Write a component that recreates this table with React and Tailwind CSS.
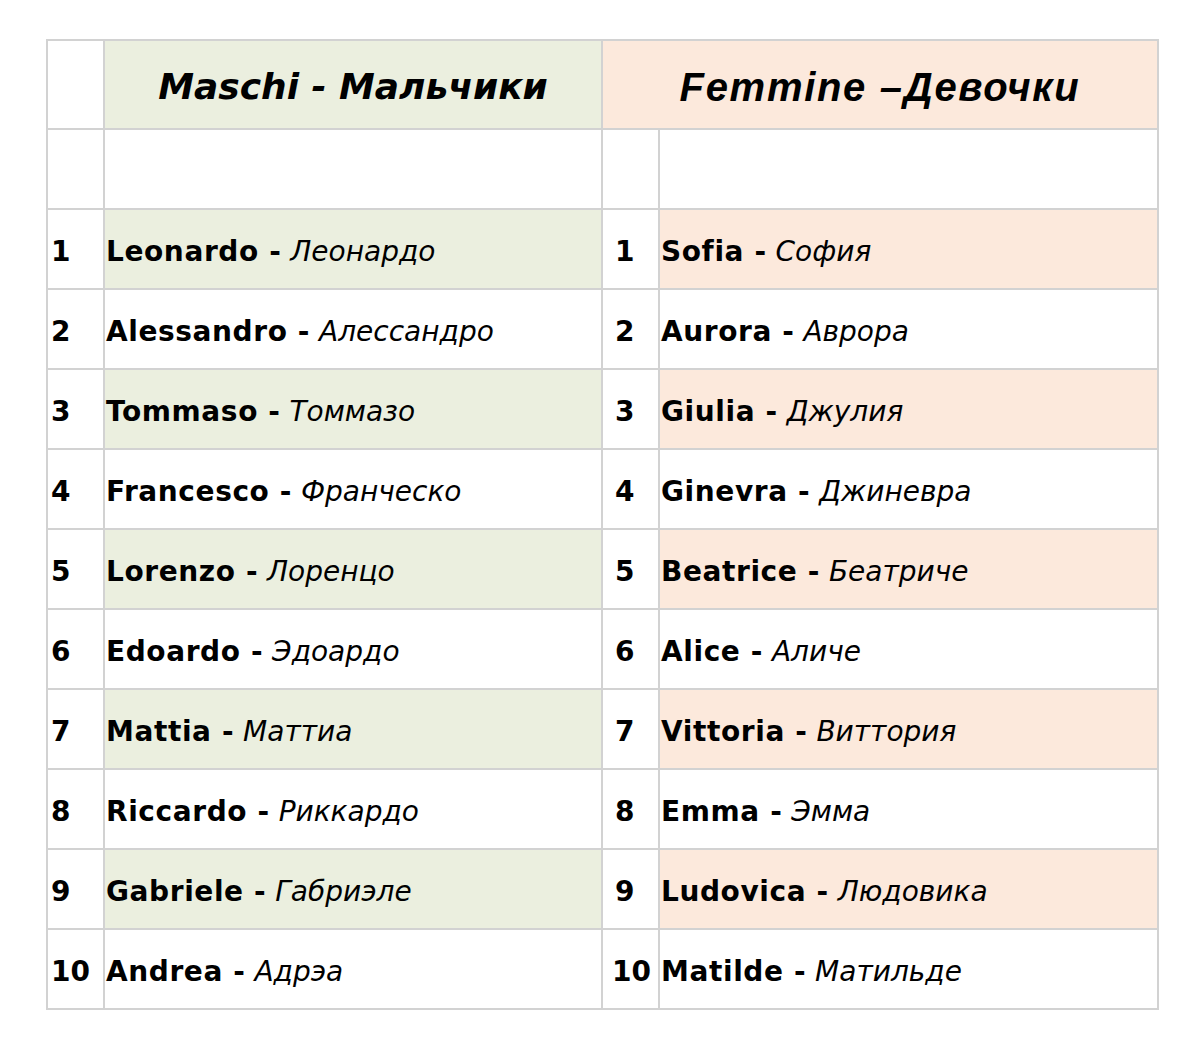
import React from "react";

const boys = [
    ["Leonardo", "Леонардо"],
    ["Alessandro", "Алессандро"],
    ["Tommaso", "Томмазо"],
    ["Francesco", "Франческо"],
    ["Lorenzo", "Лоренцо"],
    ["Edoardo", "Эдоардо"],
    ["Mattia", "Маттиа"],
    ["Riccardo", "Риккардо"],
    ["Gabriele", "Габриэле"],
    ["Andrea", "Адрэа"],
];

const girls = [
    ["Sofia", "София"],
    ["Aurora", "Аврора"],
    ["Giulia", "Джулия"],
    ["Ginevra", "Джиневра"],
    ["Beatrice", "Беатриче"],
    ["Alice", "Аличе"],
    ["Vittoria", "Виттория"],
    ["Emma", "Эмма"],
    ["Ludovica", "Людовика"],
    ["Matilde", "Матильде"],
];

const cell = "border-2 border-[#d2d2d2] p-0";

const Name = ({ it, ru }) => (
    <span className="pl-[1px]">
        <b className="tracking-[0.6px]">{it} -</b> <i>{ru}</i>
    </span>
);

const App = () => {
    return (
        <div className="bg-white w-[1200px] h-[1054px] pt-[39px] pl-[46px] font-['DejaVu_Sans',Verdana,sans-serif] text-black">
            <table className="border-collapse table-fixed w-[1111px] text-[28px]">
                <colgroup>
                    <col className="w-[57px]" />
                    <col className="w-[498px]" />
                    <col className="w-[57px]" />
                    <col className="w-[499px]" />
                </colgroup>
                <tbody>
                    <tr className="h-[89px]">
                        <td className={cell}></td>
                        <td className={`${cell} bg-[#ebefdf] text-center text-[36px] font-bold italic pt-[5px]`}>
                            Maschi - Мальчики
                        </td>
                        <td
                            colSpan={2}
                            className={`${cell} bg-[#fce9dc] text-center text-[40px] tracking-[1.7px] font-bold italic pt-[5px] font-['Liberation_Sans',Arial,sans-serif]`}
                        >
                            Femmine –Девочки
                        </td>
                    </tr>
                    <tr className="h-[80px]">
                        <td className={cell}></td>
                        <td className={cell}></td>
                        <td className={cell}></td>
                        <td className={cell}></td>
                    </tr>
                    {boys.map((b, i) => {
                        const odd = i % 2 === 0;
                        return (
                            <tr key={i} className="h-[80px]">
                                <td className={`${cell} font-bold pl-[3px] pt-[6px]`}>{i + 1}</td>
                                <td className={`${cell} pt-[6px] ${odd ? "bg-[#ebefdf]" : ""}`}>
                                    <Name it={b[0]} ru={b[1]} />
                                </td>
                                <td className={`${cell} font-bold pt-[6px] ${i === 9 ? "pl-[9px]" : "pl-[12px]"}`}>{i + 1}</td>
                                <td className={`${cell} pt-[6px] ${odd ? "bg-[#fce9dc]" : ""}`}>
                                    <Name it={girls[i][0]} ru={girls[i][1]} />
                                </td>
                            </tr>
                        );
                    })}
                </tbody>
            </table>
        </div>
    );
};

export default App;
